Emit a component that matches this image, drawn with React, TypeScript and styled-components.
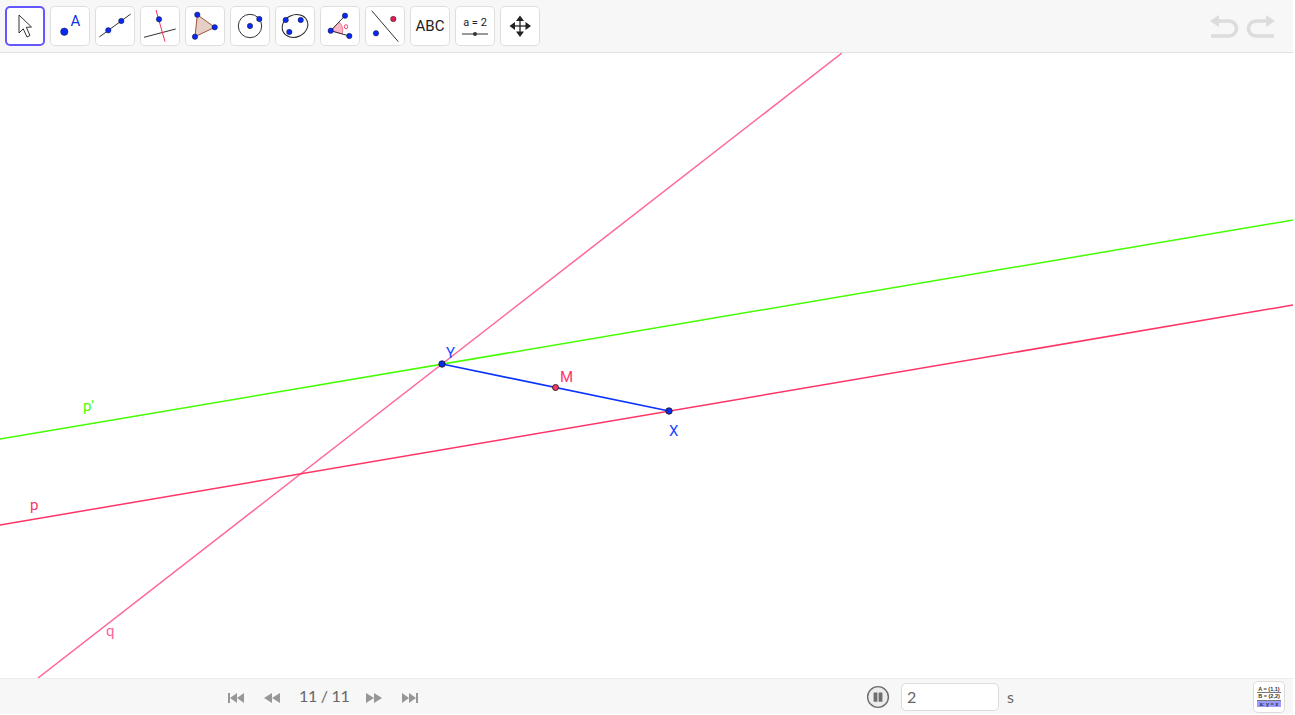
import React from "react";
import styled, { createGlobalStyle } from "styled-components";

const GlobalStyle = createGlobalStyle`
  html, body {
    margin: 0;
    padding: 0;
    background: #fff;
    overflow: hidden;
  }
  body {
    font-family: Roboto, "Liberation Sans", sans-serif;
  }
`;

const Page = styled.div`
  width: 1293px;
  height: 714px;
  display: flex;
  flex-direction: column;
  overflow: hidden;
`;

const Toolbar = styled.div`
  height: 52px;
  flex: none;
  display: flex;
  align-items: center;
  justify-content: space-between;
  padding: 0 17px 0 5px;
  background: #f7f7f7;
  border-bottom: 1px solid #e0e0e0;
`;

const ToolGroup = styled.div`
  display: flex;
  gap: 5px;
`;

const ToolButton = styled.div<{ $active?: boolean }>`
  width: 40px;
  height: 40px;
  box-sizing: border-box;
  display: flex;
  align-items: center;
  justify-content: center;
  background: #fff;
  border-radius: 5px;
  box-shadow: ${(p) => (p.$active ? "inset 0 0 0 2px #6557ff" : "inset 0 0 0 1px #dedede")};
`;

const IconLabel = styled.text`
  font-family: Roboto, "Liberation Sans", sans-serif;
`;

const ToolText = styled.span`
  font-size: 15px;
  color: #222;
`;

const SliderBox = styled.div`
  display: flex;
  flex-direction: column;
  align-items: center;
  gap: 3px;
`;

const SliderText = styled.span`
  font-size: 11px;
  line-height: 13px;
  color: #222;
`;

const HistoryGroup = styled.div`
  display: flex;
  gap: 7px;
`;

const Canvas = styled.div`
  flex: 1;
  min-height: 0;
  background: #fff;

  svg {
    display: block;
  }
`;

const Label = styled.text`
  font-family: Roboto, "Liberation Sans", sans-serif;
  font-size: 15px;
`;

const BottomBar = styled.div`
  height: 35px;
  flex: none;
  display: flex;
  align-items: center;
  padding-left: 227px;
  padding-right: 8px;
  background: #f7f7f7;
  border-top: 1px solid #ececec;
  font-family: Lato, Roboto, sans-serif;
`;

const Player = styled.div`
  display: flex;
  align-items: center;
  gap: 18px;
  color: #666;

  svg {
    margin-top: 2px;
  }
`;

const StepCount = styled.span`
  font-size: 16px;
  letter-spacing: -0.3px;
  width: 48px;
  margin-bottom: 2px;
  text-align: center;
  white-space: nowrap;
`;

const Speed = styled.div`
  display: flex;
  align-items: center;
  margin-left: 447px;
  gap: 11px;
`;

const SpeedInput = styled.input`
  width: 98px;
  height: 28px;
  box-sizing: border-box;
  padding: 0 5px;
  border: 1px solid #dcdcdc;
  border-radius: 5px;
  background: #fff;
  color: #666;
  font-family: Lato, Roboto, sans-serif;
  font-size: 16px;
  outline: none;
`;

const Unit = styled.span`
  font-size: 16px;
  color: #666;
  margin-left: -3px;
`;

const AlgebraButton = styled.div`
  width: 32px;
  height: 32px;
  box-sizing: border-box;
  margin-left: auto;
  padding: 5px 4px;
  background: #fff;
  border-radius: 5px;
  box-shadow: inset 0 0 0 1px #dcdcdc;
  display: flex;
  flex-direction: column;
  gap: 0;
  font-family: "Liberation Sans", sans-serif;
`;

const AlgebraRow = styled.div<{ $selected?: boolean }>`
  height: ${(p) => (p.$selected ? "6px" : "7.5px")};
  box-sizing: border-box;
  font-size: 5.5px;
  line-height: 6px;
  font-weight: 700;
  text-align: center;
  white-space: nowrap;
  color: #333;
  border-bottom: ${(p) => (p.$selected ? "none" : "1px solid #777")};
  background: ${(p) => (p.$selected ? "#9a9aff" : "transparent")};
`;

const BLUE = "#0a28f5";
const INK = "#1c1c1f";

const Dot: React.FC<{ x: number; y: number; r?: number; fill?: string }> = ({ x, y, r = 2.7, fill = BLUE }) => (
  <circle cx={x} cy={y} r={r} fill={fill} stroke={INK} strokeWidth={0.5} />
);

const MoveIcon = () => (
  <svg width="40" height="40" viewBox="0 0 40 40">
    <path d="M14 9 L26.5 21 L21.3 21.3 L25 29.5 L22 31 L18.2 22.8 L14 27 Z" fill="#fff" stroke="#333" strokeWidth="1" />
  </svg>
);

const PointIcon = () => (
  <svg width="40" height="40" viewBox="0 0 40 40">
    <circle cx="14.3" cy="25.7" r="3.7" fill={BLUE} stroke={INK} strokeWidth="0.5" />
    <IconLabel x="20.5" y="19.5" fill="#0a34e0" fontSize="15">A</IconLabel>
  </svg>
);

const LineIcon = () => (
  <svg width="40" height="40" viewBox="0 0 40 40">
    <line x1="4.3" y1="31" x2="35.7" y2="8" stroke="#333" strokeWidth="1" />
    <Dot x={13.3} y={24.3} />
    <Dot x={26.3} y={15} />
  </svg>
);

const PerpIcon = () => (
  <svg width="40" height="40" viewBox="0 0 40 40">
    <line x1="4" y1="31.3" x2="35.7" y2="23" stroke="#333" strokeWidth="1" />
    <line x1="16" y1="4" x2="25" y2="35.7" stroke="#f0325f" strokeWidth="1" />
    <Dot x={19} y={13.3} />
  </svg>
);

const PolygonIcon = () => (
  <svg width="40" height="40" viewBox="0 0 40 40">
    <polygon points="12.3,8.7 29.7,21.3 10,30.7" fill="#e6cfc5" stroke="#a0523d" strokeWidth="1" />
    <Dot x={12.3} y={8.7} />
    <Dot x={29.7} y={21.3} />
    <Dot x={10} y={30.7} />
  </svg>
);

const CircleIcon = () => (
  <svg width="40" height="40" viewBox="0 0 40 40">
    <circle cx="20" cy="20" r="11.7" fill="none" stroke="#333" strokeWidth="1" />
    <Dot x={20} y={20} />
    <Dot x={29.3} y={13} />
  </svg>
);

const ConicIcon = () => (
  <svg width="40" height="40" viewBox="0 0 40 40">
    <ellipse cx="20" cy="20" rx="13.2" ry="11" transform="rotate(-25 20 20)" fill="none" stroke="#222" strokeWidth="1" />
    <Dot x={10.7} y={14} />
    <Dot x={25.7} y={14} />
    <Dot x={14.3} y={26} />
  </svg>
);

const AngleIcon = () => (
  <svg width="40" height="40" viewBox="0 0 40 40">
    <path d="M10.7 24.7 L19 16 A12 12 0 0 1 22.3 28 Z" fill="#f7b8c8" stroke="#f0325f" strokeWidth="0.6" />
    <line x1="10.7" y1="24.7" x2="25" y2="9.7" stroke="#333" strokeWidth="1" />
    <line x1="10.7" y1="24.7" x2="29.3" y2="30" stroke="#333" strokeWidth="1" />
    <ellipse cx="26" cy="20.7" rx="1.7" ry="2" fill="none" stroke="#f0325f" strokeWidth="0.9" />
    <Dot x={10.7} y={24.7} />
    <Dot x={25} y={9.7} />
    <Dot x={29.3} y={30} />
  </svg>
);

const ReflectIcon = () => (
  <svg width="40" height="40" viewBox="0 0 40 40">
    <line x1="6.7" y1="4.7" x2="33.3" y2="35.7" stroke="#333" strokeWidth="1" />
    <Dot x={28.3} y={13} fill="#e8184f" />
    <Dot x={11} y={27.3} />
  </svg>
);

const SliderIcon = () => (
  <SliderBox>
    <SliderText>a = 2</SliderText>
    <svg width="26" height="4" viewBox="0 0 26 4">
      <line x1="0" y1="2" x2="26" y2="2" stroke="#333" strokeWidth="1" />
      <circle cx="13" cy="2" r="2" fill="#333" />
    </svg>
  </SliderBox>
);

const TranslateIcon = () => (
  <svg width="40" height="40" viewBox="0 0 40 40">
    <line x1="20" y1="11" x2="20" y2="29" stroke="#222" strokeWidth="1.3" />
    <line x1="11" y1="20" x2="29" y2="20" stroke="#222" strokeWidth="1.3" />
    <polygon points="20,9.5 16,15 24,15" fill="#222" />
    <polygon points="20,31 16,25.5 24,25.5" fill="#222" />
    <polygon points="9.5,20 15,16 15,24" fill="#222" />
    <polygon points="31,20 25.5,16 25.5,24" fill="#222" />
  </svg>
);

const HistoryIcon: React.FC<{ flip?: boolean }> = ({ flip }) => (
  <svg width="30" height="26" viewBox="0 0 30 26" style={flip ? { transform: "scaleX(-1)" } : undefined}>
    <polygon points="1,8 10,2 10,14" fill="#dcdcdc" />
    <path d="M8 8 H20 A7.5 7.5 0 0 1 20 23 H2" fill="none" stroke="#dcdcdc" strokeWidth="3.6" />
  </svg>
);

const NavIcon: React.FC<{ kind: "first" | "prev" | "next" | "last" }> = ({ kind }) => (
  <svg width="18" height="12" viewBox="0 0 18 12" style={kind === "next" || kind === "last" ? { transform: "scaleX(-1)" } : undefined}>
    {kind === "first" || kind === "last" ? <rect x="1" y="1" width="2" height="10" fill="#979797" /> : null}
    <polygon points={kind === "first" || kind === "last" ? "3,6 10,1 10,11" : "1,6 9,1 9,11"} fill="#979797" />
    <polygon points={kind === "first" || kind === "last" ? "10,6 17,1 17,11" : "9,6 17,1 17,11"} fill="#979797" />
  </svg>
);

const PauseIcon = () => (
  <svg width="24" height="24" viewBox="0 0 24 24">
    <circle cx="12" cy="12" r="10.4" fill="#ececec" stroke="#6e6e6e" strokeWidth="1.4" />
    <rect x="7.6" y="7.4" width="3.8" height="9.4" rx="0.6" fill="#6e6e6e" />
    <rect x="12.6" y="7.4" width="3.8" height="9.4" rx="0.6" fill="#6e6e6e" />
  </svg>
);

const tools = [
  <MoveIcon />,
  <PointIcon />,
  <LineIcon />,
  <PerpIcon />,
  <PolygonIcon />,
  <CircleIcon />,
  <ConicIcon />,
  <AngleIcon />,
  <ReflectIcon />,
  <ToolText>ABC</ToolText>,
  <SliderIcon />,
  <TranslateIcon />,
];

const Construction = () => (
  <svg width="1293" height="625" viewBox="0 53 1293 625">
    <line x1="38" y1="678" x2="842" y2="53" stroke="#ff6699" strokeWidth="1.5" />
    <line x1="0" y1="439" x2="1293" y2="220" stroke="#44ff00" strokeWidth="1.5" />
    <line x1="0" y1="525" x2="1293" y2="305" stroke="#ff3366" strokeWidth="1.5" />
    <line x1="442" y1="364" x2="669" y2="411" stroke="#0a33ff" strokeWidth="1.7" />
    <circle cx="442" cy="364" r="3.2" fill="#0a2cf0" stroke="#1c1c1f" strokeWidth="0.9" />
    <circle cx="669" cy="411" r="3.2" fill="#0a2cf0" stroke="#1c1c1f" strokeWidth="0.9" />
    <circle cx="555.5" cy="387.5" r="3" fill="#ff3366" stroke="#1c1c1f" strokeWidth="0.9" />
    <Label x="446" y="358" fill="#1a47ff">Y</Label>
    <Label x="560" y="382" fill="#ff3366">M</Label>
    <Label x="669" y="436" fill="#1a47ff">X</Label>
    <Label x="83" y="411" fill="#44ff00">p'</Label>
    <Label x="30" y="510" fill="#ff3366">p</Label>
    <Label x="106" y="636" fill="#ff6699">q</Label>
  </svg>
);

export default function App() {
  return (
    <Page>
      <GlobalStyle />
      <Toolbar>
        <ToolGroup>
          {tools.map((icon, i) => (
            <ToolButton key={i} $active={i === 0}>
              {icon}
            </ToolButton>
          ))}
        </ToolGroup>
        <HistoryGroup>
          <HistoryIcon />
          <HistoryIcon flip />
        </HistoryGroup>
      </Toolbar>
      <Canvas>
        <Construction />
      </Canvas>
      <BottomBar>
        <Player>
          <NavIcon kind="first" />
          <NavIcon kind="prev" />
          <StepCount>11 / 11</StepCount>
          <NavIcon kind="next" />
          <NavIcon kind="last" />
        </Player>
        <Speed>
          <PauseIcon />
          <SpeedInput defaultValue="2" />
          <Unit>s</Unit>
        </Speed>
        <AlgebraButton>
          <AlgebraRow>A = (1,1)</AlgebraRow>
          <AlgebraRow>B = (2,2)</AlgebraRow>
          <AlgebraRow $selected>a: y = x</AlgebraRow>
        </AlgebraButton>
      </BottomBar>
    </Page>
  );
}
